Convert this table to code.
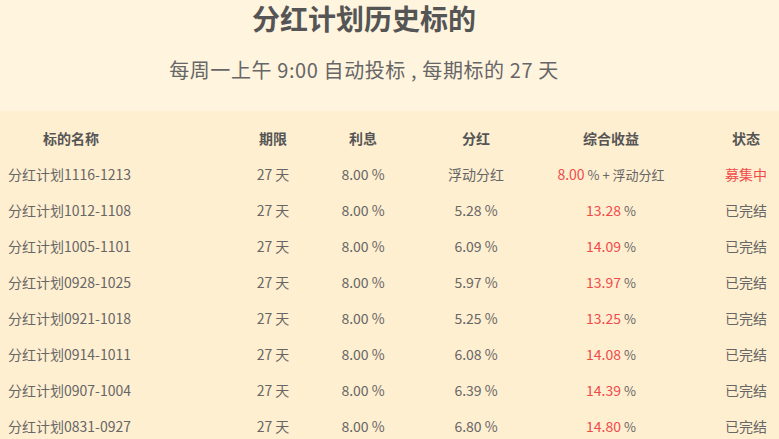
type Row = {
  name: string;
  dividend: string;
  total: string;
  open?: boolean;
};

const rows: Row[] = [
  { name: '分红计划1116-1213', dividend: '浮动分红', total: '8.00', open: true },
  { name: '分红计划1012-1108', dividend: '5.28 %', total: '13.28' },
  { name: '分红计划1005-1101', dividend: '6.09 %', total: '14.09' },
  { name: '分红计划0928-1025', dividend: '5.97 %', total: '13.97' },
  { name: '分红计划0921-1018', dividend: '5.25 %', total: '13.25' },
  { name: '分红计划0914-1011', dividend: '6.08 %', total: '14.08' },
  { name: '分红计划0907-1004', dividend: '6.39 %', total: '14.39' },
  { name: '分红计划0831-0927', dividend: '6.80 %', total: '14.80' },
];

const cols = 'grid grid-cols-[233px_80px_100px_126px_144px_96px] items-center';

export default function App() {
  return (
    <div
      className="w-[779px] h-[439px] overflow-hidden bg-[#ffefd1] text-[#666]"
      style={{ fontFamily: '"Noto Sans CJK SC", "Microsoft YaHei", sans-serif' }}
    >
      <div className="h-[111px] bg-[#fff4de] pt-[3px]">
        <div className="w-[728px] text-center">
          <h1 className="text-[28px] leading-[30px] font-bold text-[#555]">分红计划历史标的</h1>
          <p className="mt-[23px] text-[20px] leading-[28px] tracking-[0.6px] text-[#666]">
            每周一上午 9:00 自动投标 , 每期标的 27 天
          </p>
        </div>
      </div>

      <div className={`${cols} mt-[9px] h-[36px] text-[14px] font-bold text-[#555]`}>
        <div className="pl-[43px]">标的名称</div>
        <div className="text-center">期限</div>
        <div className="text-center">利息</div>
        <div className="text-center">分红</div>
        <div className="text-center">综合收益</div>
        <div className="pl-[30px] text-center">
          <span className="inline-block w-[66px]">状态</span>
        </div>
      </div>

      {rows.map((r) => (
        <div key={r.name} className={`${cols} h-[36px] text-[14px]`}>
          <div className="pl-[8px]">{r.name}</div>
          <div className="text-center">27 天</div>
          <div className="text-center">8.00 %</div>
          <div className="text-center">{r.dividend}</div>
          <div className="text-center whitespace-nowrap">
            <span className="text-[#f04b4b]">{r.total}</span>
            <span className="text-[13px]"> %</span>
            {r.open && <span className="text-[13px]"> + 浮动分红</span>}
          </div>
          <div className="pl-[30px] text-center">
            <span className={`inline-block w-[66px] ${r.open ? 'text-[#f04b4b]' : ''}`}>
              {r.open ? '募集中' : '已完结'}
            </span>
          </div>
        </div>
      ))}
    </div>
  );
}
